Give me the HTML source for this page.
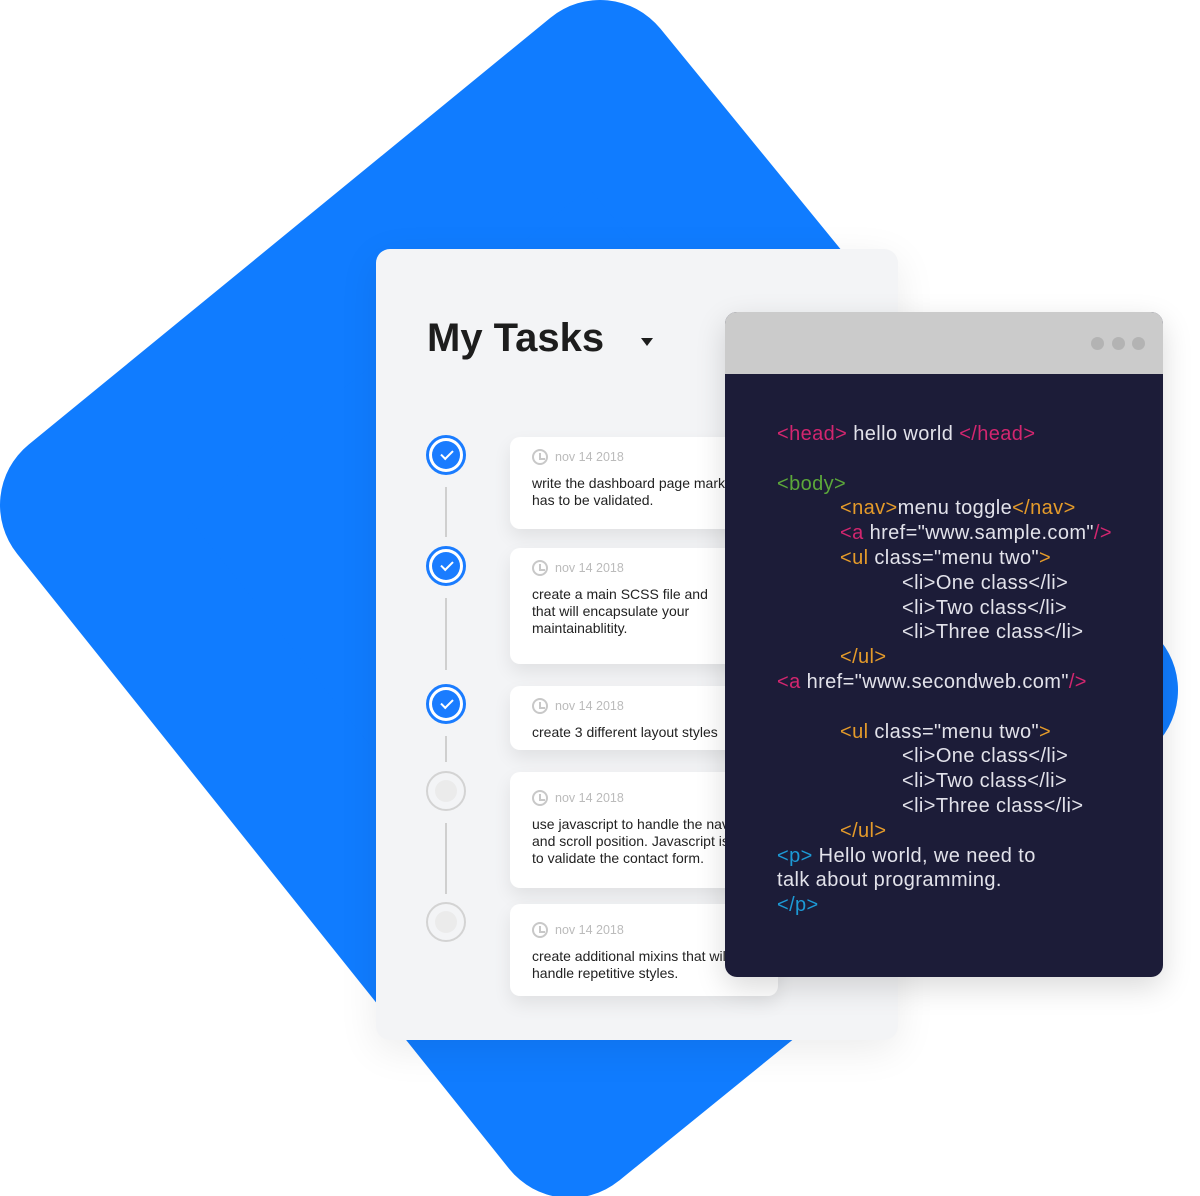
<!DOCTYPE html>
<html><head><meta charset="utf-8"><style>
*{margin:0;padding:0;box-sizing:border-box}
body{width:1200px;height:1196px;background:#fff;position:relative;overflow:hidden;font-family:"Liberation Sans",sans-serif}
.abs{position:absolute}
.card{left:376px;top:249px;width:522px;height:791px;background:#f3f4f6;border-radius:14px;box-shadow:0 10px 40px rgba(0,0,0,.08)}
h1{position:absolute;left:427px;top:316px;font-size:40px;font-weight:bold;color:#1d1d1d;letter-spacing:0}
.tri{left:641px;top:338px;width:0;height:0;border-left:6px solid transparent;border-right:6px solid transparent;border-top:8px solid #1d1d1d}
.task{position:absolute;left:510px;width:268px;background:#fff;border-radius:10px;box-shadow:0 8px 18px rgba(0,0,0,.08);padding:12px 0 0 22px;font-size:14px;color:#222;line-height:17px;white-space:nowrap}
.date{color:#bbb;font-size:12.5px;display:flex;align-items:center;gap:7px;margin-bottom:10px;height:16px}
.clk{width:16px;height:16px;border:2px solid #c8c8c8;border-radius:50%;position:relative}
.clk:after{content:"";position:absolute;left:5px;top:2px;width:4px;height:5px;border-left:2px solid #c8c8c8;border-bottom:2px solid #c8c8c8}
.dot{position:absolute;left:426px;width:40px;height:40px;border-radius:50%}
.done{border:3px solid #1a7cff;background:#fff}
.done:after{content:"";position:absolute;left:3px;top:3px;width:28px;height:28px;border-radius:50%;background:#1a7cff}
.done:before{content:"";position:absolute;left:12px;top:12px;width:10px;height:5px;border-left:2px solid #fff;border-bottom:2px solid #fff;transform:rotate(-45deg);z-index:2}
.todo{border:2px solid #d3d3d3;background:#f3f4f6}
.todo:after{content:"";position:absolute;left:7px;top:7px;width:22px;height:22px;border-radius:50%;background:#ebebeb}
.ln{position:absolute;left:445px;width:2px;background:#cfcfcf}
.code{left:725px;top:312px;width:438px;height:665px;background:#1c1c38;border-radius:12px;overflow:hidden;box-shadow:0 10px 30px rgba(0,0,0,.15)}
.bar{height:62px;background:#cbcbcb;position:relative}
.bar i{position:absolute;top:25px;width:13px;height:13px;border-radius:50%;background:#b3b3b3}
pre{position:absolute;left:777px;top:422px;font-family:"Liberation Sans",sans-serif;font-size:20px;line-height:24.8px;color:#e2e2ea;white-space:pre;letter-spacing:0.4px}
.p{color:#d3266f}.o{color:#e59b2a}.g{color:#5ca83a}.b{color:#1c9ad6}
</style></head><body>
<svg class="abs" style="left:0;top:0" width="1200" height="1196"><polygon points="600,78 78,505 570,1120 1100,690" fill="#107cff" stroke="#107cff" stroke-width="156" stroke-linejoin="round"/></svg>
<div class="abs card"></div>
<h1>My Tasks</h1>
<div class="abs tri"></div>
<div class="ln" style="top:487px;height:50px"></div>
<div class="ln" style="top:598px;height:72px"></div>
<div class="ln" style="top:736px;height:26px"></div>
<div class="ln" style="top:823px;height:71px"></div>
<div class="dot done" style="top:435px"></div>
<div class="dot done" style="top:546px"></div>
<div class="dot done" style="top:684px"></div>
<div class="dot todo" style="top:771px"></div>
<div class="dot todo" style="top:902px"></div>
<div class="task" style="top:437px;height:92px"><div class="date"><span class="clk"></span>nov 14 2018</div>write the dashboard page markup<br>has to be validated.</div>
<div class="task" style="top:548px;height:116px"><div class="date"><span class="clk"></span>nov 14 2018</div>create a main SCSS file and<br>that will encapsulate your<br>maintainablitity.</div>
<div class="task" style="top:686px;height:64px"><div class="date"><span class="clk"></span>nov 14 2018</div>create 3 different layout styles</div>
<div class="task" style="top:772px;height:116px;padding-top:18px"><div class="date"><span class="clk"></span>nov 14 2018</div>use javascript to handle the navbar<br>and scroll position. Javascript is al<br>to validate the contact form.</div>
<div class="task" style="top:904px;height:92px;padding-top:18px"><div class="date"><span class="clk"></span>nov 14 2018</div>create additional mixins that will<br>handle repetitive styles.</div>
<div class="abs code"><div class="bar"><i style="left:366px"></i><i style="left:387px"></i><i style="left:407px"></i></div></div>
<pre><span class="p">&lt;head&gt;</span> hello world <span class="p">&lt;/head&gt;</span>

<span class="g">&lt;body&gt;</span>
<span style="padding-left:63px"></span><span class="o">&lt;nav&gt;</span>menu toggle<span class="o">&lt;/nav&gt;</span>
<span style="padding-left:63px"></span><span class="p">&lt;a</span> href="www.sample.com"<span class="p">/&gt;</span>
<span style="padding-left:63px"></span><span class="o">&lt;ul</span> class="menu two"<span class="o">&gt;</span>
<span style="padding-left:125px"></span>&lt;li&gt;One class&lt;/li&gt;
<span style="padding-left:125px"></span>&lt;li&gt;Two class&lt;/li&gt;
<span style="padding-left:125px"></span>&lt;li&gt;Three class&lt;/li&gt;
<span style="padding-left:63px"></span><span class="o">&lt;/ul&gt;</span>
<span class="p">&lt;a</span> href="www.secondweb.com"<span class="p">/&gt;</span>

<span style="padding-left:63px"></span><span class="o">&lt;ul</span> class="menu two"<span class="o">&gt;</span>
<span style="padding-left:125px"></span>&lt;li&gt;One class&lt;/li&gt;
<span style="padding-left:125px"></span>&lt;li&gt;Two class&lt;/li&gt;
<span style="padding-left:125px"></span>&lt;li&gt;Three class&lt;/li&gt;
<span style="padding-left:63px"></span><span class="o">&lt;/ul&gt;</span>
<span class="b">&lt;p&gt;</span> Hello world, we need to
talk about programming.
<span class="b">&lt;/p&gt;</span></pre>
</body></html>
